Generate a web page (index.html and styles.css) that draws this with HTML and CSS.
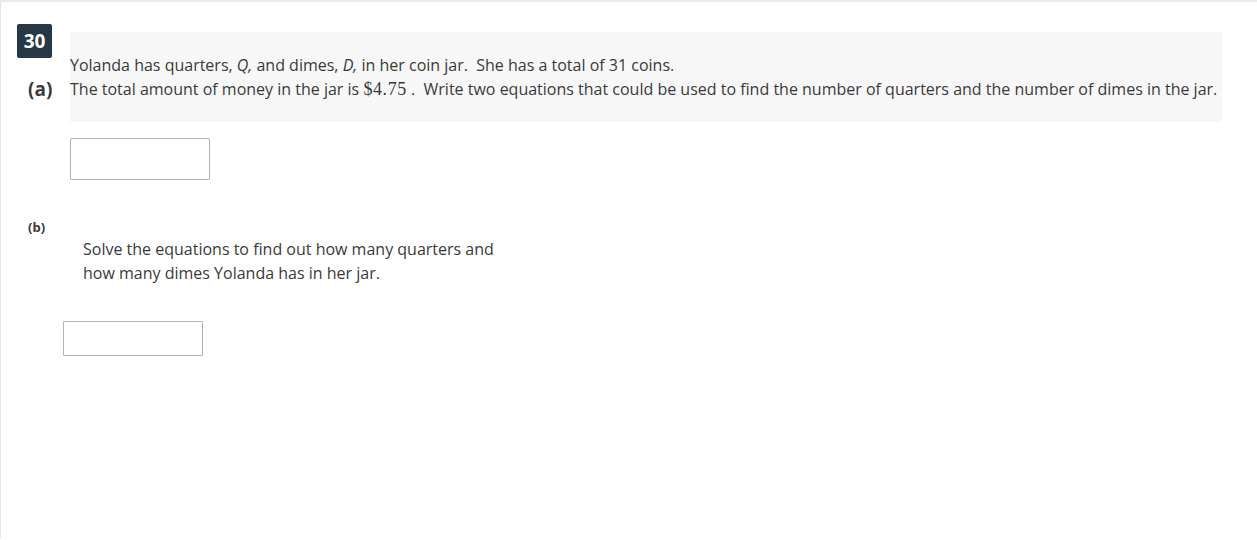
FILE: index.html
```html
<!DOCTYPE html>
<html>
<head>
<meta charset="utf-8">
<link rel="stylesheet" href="styles.css">
</head>
<body>
<div class="card">
  <div class="head">
    <div class="badge">30</div>
  </div>
  <div class="part-a">
    <div class="label-a">(a)</div>
    <div class="stem">
      <p>Yolanda has quarters, <i>Q,</i> and dimes, <i>D,</i> in her coin jar.&nbsp; She has a total of 31 coins.</p>
      <p>The total amount of money in the jar is <span class="math">$4.75</span>&nbsp;.&nbsp; Write two equations that could be used to find the number of quarters and the number of dimes in the jar.</p>
    </div>
  </div>
  <div class="answer answer-a"><input class="box box-a" type="text"></div>
  <div class="label-b">(b)</div>
  <p class="text-b">Solve the equations to find out how many quarters and how many dimes Yolanda has in her jar.</p>
  <div class="answer answer-b"><input class="box box-b" type="text"></div>
</div>
</body>
</html>
```

FILE: styles.css
```css
html, body {
  margin: 0;
  padding: 0;
  background: #fff;
}
body {
  font-family: "Open Sans", "Noto Sans", sans-serif;
  color: #3a3a3a;
}
.card {
  border-top: 2px solid #ebebeb;
  border-left: 1px solid #e6e6e6;
  height: 538px;
  box-sizing: border-box;
}
.head {
  padding: 22px 0 0 16px;
  height: 0;
}
.badge {
  width: 35px;
  height: 34px;
  background: #263746;
  color: #fff;
  font-weight: 700;
  font-size: 19px;
  line-height: 34px;
  text-align: center;
  border-radius: 2px;
}
.part-a {
  display: flex;
  align-items: flex-end;
  padding-top: 8px;
}
.label-a {
  width: 69px;
  box-sizing: border-box;
  padding-left: 27px;
  font-weight: 700;
  font-size: 19px;
  line-height: 24px;
  padding-bottom: 21px;
}
.stem {
  width: 1152px;
  background: #f7f7f7;
  padding: 21px 0 21px 0;
  font-size: 16px;
  line-height: 24px;
}
.stem p {
  margin: 0;
}
.math {
  font-family: "Liberation Serif", "DejaVu Serif", serif;
  font-size: 18px;
  letter-spacing: 0.6px;
}
.answer-a {
  padding: 16px 0 0 69px;
}
.box {
  display: block;
  width: 140px;
  box-sizing: border-box;
  border: 1px solid #b3b3b3;
  background: #fff;
  margin: 0;
  padding: 0;
  border-radius: 1px;
}
.box-a { height: 42px; }
.box-b { height: 35px; }
.label-b {
  padding: 38px 0 0 27px;
  font-weight: 700;
  font-size: 13px;
  line-height: 18px;
}
.text-b {
  margin: 1px 0 0 82px;
  width: 420px;
  font-size: 16px;
  line-height: 24px;
}
.answer-b {
  padding: 36px 0 0 62px;
}
```
